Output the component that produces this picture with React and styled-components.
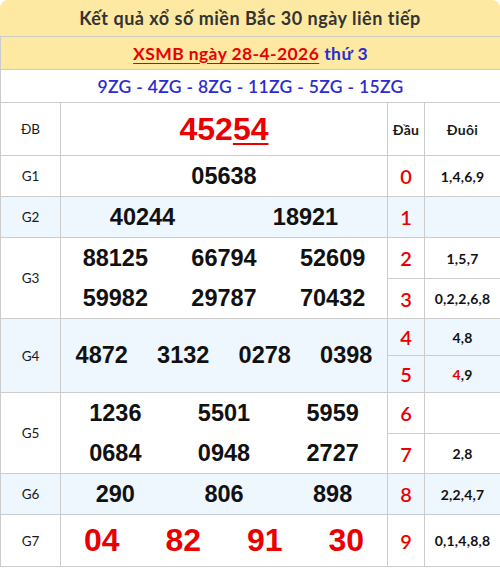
import React from 'react';
import styled, { createGlobalStyle } from 'styled-components';

const GlobalStyle = createGlobalStyle`
  html, body {
    margin: 0;
    padding: 0;
    background: #fff;
  }
`;

const RED = '#ea0000';
const BLUE = '#2b2bd2';
const LINE = '#cccccc';
const STRIPE = '#eef6fe';

const Wrapper = styled.div`
  width: 500px;
  font-family: Lato, 'Open Sans', sans-serif;
`;

const Title = styled.div`
  height: 36px;
  background: #fde9a1;
  border-radius: 8px 8px 0 0;
  display: flex;
  align-items: center;
  justify-content: center;
  font-size: 18px;
  letter-spacing: 0.5px;
  font-weight: 700;
  color: #333;
`;

const Table = styled.table`
  width: 500px;
  border-collapse: collapse;
  table-layout: fixed;
`;

const Row = styled.tr`
  height: ${p => p.h}px;
  background: ${p => p.stripe ? STRIPE : '#fff'};
`;

const Cell = styled.td`
  border: 1px solid ${LINE};
  padding: 0;
  text-align: center;
  vertical-align: middle;
`;

const DateCell = styled(Cell)`
  background: #fde9a1;
  font-size: 17.5px;
  letter-spacing: 0.4px;
  font-weight: 700;
`;

const DateLink = styled.a`
  color: ${RED};
  text-decoration: underline;
  text-underline-offset: 3px;
`;

const Weekday = styled.span`
  color: ${BLUE};
  margin-left: 5px;
`;

const CodeCell = styled(Cell)`
  background: #fff;
  color: ${BLUE};
  font-size: 17.5px;
  letter-spacing: 0.3px;
  font-weight: 600;
`;

const Label = styled(Cell)`
  font-size: 13.5px;
  color: #1a1a1a;
`;

const HeadText = styled(Cell)`
  font-size: 14px;
  font-weight: 700;
  letter-spacing: 0.3px;
  color: #1a1a1a;
`;

const Special = styled.span`
  font-family: 'Liberation Sans', Arial, sans-serif;
  font-weight: 700;
  font-size: 32px;
  color: ${RED};
  & u {
    text-underline-offset: 3px;
    text-decoration-thickness: 2px;
  }
`;

const Numbers = styled.div`
  display: grid;
  grid-template-columns: repeat(${p => p.cols}, 1fr);
  grid-auto-rows: ${p => p.rowH}px;
  align-items: center;
  font-family: 'Liberation Sans', Arial, sans-serif;
  font-weight: 700;
  font-size: ${p => p.big ? 32 : 23.5}px;
  color: ${p => p.big ? RED : '#111'};
`;

const Head = styled(Cell)`
  font-family: Lato, 'Liberation Sans', sans-serif;
  font-size: 20px;
  font-weight: 600;
  color: ${RED};
`;

const Tail = styled(Cell)`
  font-size: 14px;
  font-weight: 700;
  letter-spacing: 0.2px;
  color: #111;
`;

const Hot = styled.span`
  color: ${RED};
`;

const codes = ['9ZG', '4ZG', '8ZG', '11ZG', '5ZG', '15ZG'];

const Prize = ({ nums, cols, rowH, big }) => (
  <Numbers cols={cols} rowH={rowH} big={big}>
    {nums.map((n, i) => <span key={i}>{n}</span>)}
  </Numbers>
);

export default function App() {
  return (
    <Wrapper>
      <GlobalStyle />
      <Title>Kết quả xổ số miền Bắc 30 ngày liên tiếp</Title>
      <Table>
        <colgroup>
          <col style={{ width: 60 }} />
          <col style={{ width: 327 }} />
          <col style={{ width: 37 }} />
          <col style={{ width: 76 }} />
        </colgroup>
        <tbody>
          <Row h={33}>
            <DateCell colSpan={4}>
              <DateLink>XSMB ngày 28-4-2026</DateLink>
              <Weekday>thứ 3</Weekday>
            </DateCell>
          </Row>
          <Row h={33}>
            <CodeCell colSpan={4}>{codes.join(' - ')}</CodeCell>
          </Row>
          <Row h={53}>
            <Label>ĐB</Label>
            <Cell><Special>452<u>54</u></Special></Cell>
            <HeadText>Đầu</HeadText>
            <HeadText>Đuôi</HeadText>
          </Row>
          <Row h={41}>
            <Label>G1</Label>
            <Cell><Prize nums={['05638']} cols={1} rowH={40} /></Cell>
            <Head>0</Head>
            <Tail>1,4,6,9</Tail>
          </Row>
          <Row h={41} stripe>
            <Label>G2</Label>
            <Cell><Prize nums={['40244', '18921']} cols={2} rowH={40} /></Cell>
            <Head>1</Head>
            <Tail></Tail>
          </Row>
          <Row h={41}>
            <Label rowSpan={2}>G3</Label>
            <Cell rowSpan={2}>
              <Prize nums={['88125', '66794', '52609', '59982', '29787', '70432']} cols={3} rowH={40} />
            </Cell>
            <Head>2</Head>
            <Tail>1,5,7</Tail>
          </Row>
          <Row h={40}>
            <Head>3</Head>
            <Tail>0,2,2,6,8</Tail>
          </Row>
          <Row h={37} stripe>
            <Label rowSpan={2}>G4</Label>
            <Cell rowSpan={2}>
              <Prize nums={['4872', '3132', '0278', '0398']} cols={4} rowH={40} />
            </Cell>
            <Head>4</Head>
            <Tail>4,8</Tail>
          </Row>
          <Row h={37} stripe>
            <Head>5</Head>
            <Tail><Hot>4</Hot>,9</Tail>
          </Row>
          <Row h={41}>
            <Label rowSpan={2}>G5</Label>
            <Cell rowSpan={2}>
              <Prize nums={['1236', '5501', '5959', '0684', '0948', '2727']} cols={3} rowH={40} />
            </Cell>
            <Head>6</Head>
            <Tail></Tail>
          </Row>
          <Row h={40}>
            <Head>7</Head>
            <Tail>2,8</Tail>
          </Row>
          <Row h={41} stripe>
            <Label>G6</Label>
            <Cell><Prize nums={['290', '806', '898']} cols={3} rowH={40} /></Cell>
            <Head>8</Head>
            <Tail>2,2,4,7</Tail>
          </Row>
          <Row h={52}>
            <Label>G7</Label>
            <Cell><Prize nums={['04', '82', '91', '30']} cols={4} rowH={50} big /></Cell>
            <Head>9</Head>
            <Tail>0,1,4,8,8</Tail>
          </Row>
        </tbody>
      </Table>
    </Wrapper>
  );
}
